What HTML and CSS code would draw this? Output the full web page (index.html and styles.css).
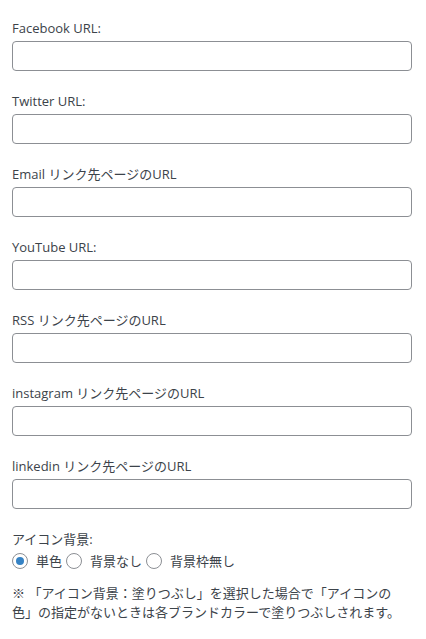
FILE: index.html
```html
<!DOCTYPE html>
<html lang="ja">
<head>
<meta charset="utf-8">
<link rel="stylesheet" href="styles.css">
</head>
<body>
<div class="form">
  <div class="field">
    <label class="lbl" for="f1">Facebook URL:</label>
    <input class="txt" id="f1" type="text">
  </div>
  <div class="field">
    <label class="lbl" for="f2">Twitter URL:</label>
    <input class="txt" id="f2" type="text">
  </div>
  <div class="field">
    <label class="lbl" for="f3">Email リンク先ページのURL</label>
    <input class="txt" id="f3" type="text">
  </div>
  <div class="field">
    <label class="lbl" for="f4">YouTube URL:</label>
    <input class="txt" id="f4" type="text">
  </div>
  <div class="field">
    <label class="lbl" for="f5">RSS リンク先ページのURL</label>
    <input class="txt" id="f5" type="text">
  </div>
  <div class="field">
    <label class="lbl" for="f6">instagram リンク先ページのURL</label>
    <input class="txt" id="f6" type="text">
  </div>
  <div class="field">
    <label class="lbl" for="f7">linkedin リンク先ページのURL</label>
    <input class="txt" id="f7" type="text">
  </div>
  <div class="radios">
    <div class="lbl">アイコン背景:</div>
    <div class="radio-row">
      <label class="opt"><span class="radio checked"></span>単色</label>
      <label class="opt"><span class="radio"></span>背景なし</label>
      <label class="opt"><span class="radio"></span>背景枠無し</label>
    </div>
  </div>
  <p class="note">※ 「アイコン背景：塗りつぶし」を選択した場合で「アイコンの色」の指定がないときは各ブランドカラーで塗りつぶしされます。</p>
</div>
</body>
</html>
```
FILE: styles.css
```css
html, body {
  margin: 0;
  padding: 0;
  background: #fff;
}
body {
  font-family: "Open Sans", "Noto Sans CJK JP", sans-serif;
  font-size: 13px;
  color: #3c434a;
}
.form {
  padding: 19px 14px 0 12px;
  width: 400px;
}
.field {
  display: flex;
  flex-direction: column;
  gap: 4px;
  margin-bottom: 21px;
}
.lbl {
  display: block;
  line-height: 18px;
}
.txt {
  box-sizing: border-box;
  width: 400px;
  height: 30px;
  margin: 0;
  border: 1px solid #8c8f94;
  border-radius: 4px;
  background: #fff;
}
.radios {
  display: flex;
  flex-direction: column;
  gap: 4px;
}
.radio-row {
  display: flex;
  align-items: center;
  gap: 4px;
  line-height: 18px;
}
.opt {
  display: flex;
  align-items: center;
  gap: 8px;
}
.radio {
  box-sizing: border-box;
  width: 16px;
  height: 16px;
  border: 1px solid #8c8f94;
  border-radius: 50%;
  background: #fff;
  display: flex;
  align-items: center;
  justify-content: center;
}
.radio.checked::before {
  content: "";
  width: 8px;
  height: 8px;
  border-radius: 50%;
  background: #3582c4;
}
.note {
  margin: 14px 0 0;
  width: 392px;
  line-height: 19px;
}
```
